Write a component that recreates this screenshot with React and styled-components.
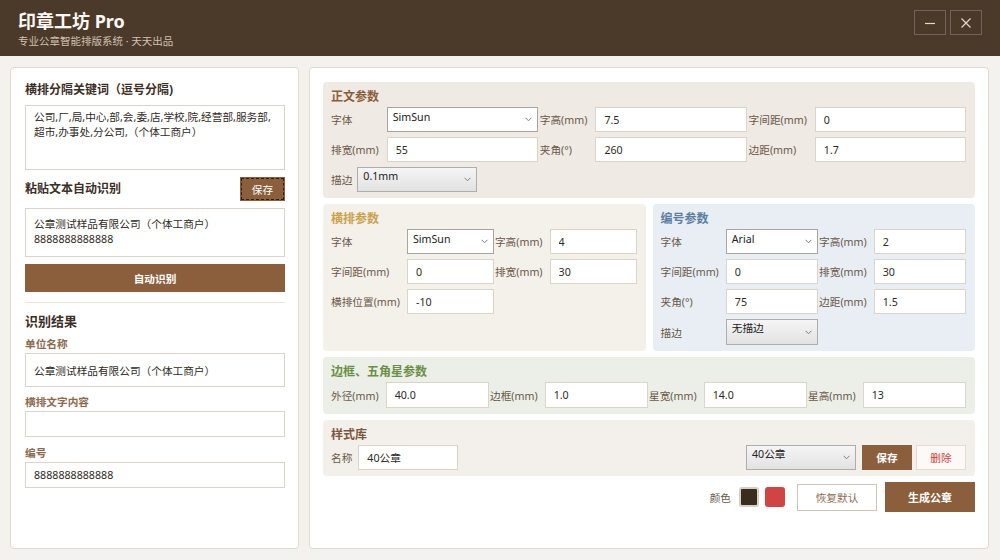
import React from "react";
import styled, { createGlobalStyle } from "styled-components";

const colors = {
  header: "#4b392a",
  page: "#f4f2ee",
  brown: "#8b5e3c",
  border: "#ddd4c9",
  label: "#6a5849",
  text: "#2f2a26",
};

const GlobalStyle = createGlobalStyle`
  html, body { margin: 0; padding: 0; background: ${colors.page}; }
  body {
    font-family: "Noto Sans", "Noto Sans CJK SC", sans-serif;
    font-size: 10.67px;
    color: ${colors.text};
  }
  * { box-sizing: border-box; }
`;

const Page = styled.div`
  width: 1000px;
  height: 560px;
  display: flex;
  flex-direction: column;
  background: ${colors.page};
  overflow: hidden;
`;

const Header = styled.header`
  height: 56px;
  flex: none;
  background: ${colors.header};
  display: flex;
  justify-content: space-between;
  align-items: flex-start;
  padding: 10px 18px 0 18px;
`;

const Brand = styled.div`
  display: flex;
  flex-direction: column;
`;

const AppTitle = styled.h1`
  margin: 0;
  font-size: 18px;
  line-height: 22px;
  font-weight: 700;
  color: #fbf7f2;
`;

const AppSubtitle = styled.div`
  margin-top: 2px;
  font-size: 10.5px;
  line-height: 14px;
  color: #cfc1b1;
`;

const WinButtons = styled.div`
  display: flex;
  gap: 4px;
`;

const WinButton = styled.button`
  width: 32px;
  height: 25px;
  padding: 0;
  display: flex;
  align-items: center;
  justify-content: center;
  background: transparent;
  border: 1px solid rgba(255, 255, 255, 0.22);
  cursor: pointer;
`;

const Main = styled.main`
  flex: 1;
  display: flex;
  gap: 10px;
  padding: 11px 11px 11px 10px;
  min-height: 0;
`;

const LeftPanel = styled.aside`
  width: 289px;
  flex: none;
  background: #fff;
  border: 1px solid #e0d9cf;
  border-radius: 4px;
  padding: 14px 13px 14px 14px;
  display: flex;
  flex-direction: column;
`;

const LeftTitle = styled.div`
  font-size: 12px;
  line-height: 16px;
  font-weight: 700;
  color: #3b2f26;
`;

const KeywordArea = styled.textarea`
  margin-top: 7px;
  width: 100%;
  height: 65px;
  border: 1px solid ${colors.border};
  padding: 4px 4px 4px 8px;
  font-family: inherit;
  font-size: 10.67px;
  line-height: 15px;
  color: ${colors.text};
  resize: none;
  outline: none;
`;

const PasteRow = styled.div`
  margin-top: 7px;
  height: 24px;
  display: flex;
  align-items: center;
  justify-content: space-between;
`;

const SmallSave = styled.button`
  width: 45px;
  height: 24px;
  border: none;
  background: ${colors.brown};
  color: #fff;
  font-family: inherit;
  font-size: 10.67px;
  outline: 1px dashed #2a1d14;
  outline-offset: -2px;
`;

const PasteBox = styled.div`
  margin-top: 7px;
  height: 49px;
  border: 1px solid ${colors.border};
  padding: 8px;
  line-height: 15px;
  color: ${colors.text};
`;

const WideButton = styled.button`
  margin-top: 7px;
  height: 28px;
  width: 100%;
  border: none;
  background: ${colors.brown};
  color: #fff;
  font-family: inherit;
  font-size: 10.67px;
  font-weight: 700;
`;

const Divider = styled.hr`
  margin: 10px 0 0;
  border: none;
  height: 1px;
  background: #ebe5dd;
`;

const ResultTitle = styled.div`
  margin-top: 9px;
  font-size: 13px;
  line-height: 18px;
  font-weight: 700;
  color: #3b2f26;
`;

const Field = styled.div`
  margin-top: ${(p) => p.$top || 7}px;
  display: flex;
  flex-direction: column;
`;

const FieldLabel = styled.label`
  line-height: 16px;
  font-weight: 700;
  color: #8b6a4f;
  margin-bottom: 1px;
`;

const TextInput = styled.input`
  width: 100%;
  min-width: 0;
  height: ${(p) => p.$h || 25}px;
  border: 1px solid ${colors.border};
  padding: 0 8px;
  font-family: inherit;
  font-size: 10.67px;
  color: ${colors.text};
  background: #fff;
  outline: none;
`;

const RightPanel = styled.section`
  flex: 1;
  background: #fff;
  border: 1px solid #e0d9cf;
  border-radius: 4px;
  padding: 14px 13px;
  display: flex;
  flex-direction: column;
  gap: 6px;
`;

const Section = styled.div`
  background: ${(p) => p.$bg};
  border-radius: 4px;
  padding: 7px 9px 6px 8px;
`;

const SectionTitle = styled.div`
  font-size: 12px;
  line-height: 16px;
  font-weight: 700;
  color: ${(p) => p.$color};
  margin-bottom: 2px;
`;

const ParamGrid = styled.div`
  display: grid;
  grid-template-columns: ${(p) => p.$cols};
  column-gap: ${(p) => p.$gap || 1}px;
  row-gap: 5px;
  align-items: center;
`;

const Label = styled.span`
  color: ${colors.label};
  padding-right: 6px;
  white-space: nowrap;
`;

const SplitRow = styled.div`
  display: grid;
  grid-template-columns: 1fr 1fr;
  gap: 7px;
`;

const InlineRow = styled.div`
  margin-top: 5px;
  display: flex;
  align-items: center;
  gap: 5px;
`;

const SelectBox = styled.div`
  height: ${(p) => p.$h || 25}px;
  width: ${(p) => (p.$width ? `${p.$width}px` : "100%")};
  min-width: 0;
  display: flex;
  align-items: center;
  justify-content: space-between;
  padding: 0 5px;
  border: 1px solid ${(p) => (p.$gray ? "#adadad" : "#a9a49e")};
  background: ${(p) => (p.$gray ? "linear-gradient(#f5f5f5, #e2e2e2)" : "#fff")};
  color: #222;
`;

const SelectText = styled.span`
  line-height: 14px;
  padding-bottom: ${(p) => (p.$gray ? 8 : 5)}px;
  white-space: nowrap;
`;

const Chevron = () => (
  <svg width="7" height="5" viewBox="0 0 7 5">
    <path d="M0.6 0.8 L3.5 3.8 L6.4 0.8" fill="none" stroke="#808080" strokeWidth="1" />
  </svg>
);

const Select = ({ value, gray, width, h }) => (
  <SelectBox $gray={gray} $width={width} $h={h}>
    <SelectText $gray={gray}>{value}</SelectText>
    <Chevron />
  </SelectBox>
);

const LibraryRow = styled.div`
  display: flex;
  align-items: center;
`;

const LibraryRight = styled.div`
  margin-left: auto;
  display: flex;
  align-items: center;
`;

const BrownButton = styled.button`
  width: ${(p) => p.$w}px;
  height: ${(p) => p.$h}px;
  margin-left: ${(p) => p.$ml || 0}px;
  border: none;
  background: ${colors.brown};
  color: #fff;
  font-family: inherit;
  font-size: ${(p) => p.$fs || 10.67}px;
  font-weight: 700;
`;

const DeleteButton = styled.button`
  width: 50px;
  height: 25px;
  margin-left: 4px;
  background: #fdf9f6;
  border: 1px solid #ecd8cf;
  color: #c9443d;
  font-family: inherit;
  font-size: 10.67px;
`;

const Footer = styled.div`
  display: flex;
  justify-content: flex-end;
  align-items: center;
  height: 30px;
`;

const FooterLabel = styled.span`
  color: ${colors.label};
  margin-right: 8px;
`;

const Swatch = styled.span`
  width: 20px;
  height: 20px;
  border-radius: 3px;
  background: ${(p) => p.$color};
  border: ${(p) => (p.$active ? "2px solid #d9cebf" : "none")};
  margin-right: ${(p) => p.$mr || 0}px;
`;

const GhostButton = styled.button`
  width: 80px;
  height: 27px;
  margin-right: 8px;
  background: #fff;
  border: 1px solid #cfc4b6;
  color: #8b6a4f;
  font-family: inherit;
  font-size: 10.67px;
`;

const App = () => (
  <Page>
    <GlobalStyle />
    <Header>
      <Brand>
        <AppTitle>印章工坊 Pro</AppTitle>
        <AppSubtitle>专业公章智能排版系统 · 天天出品</AppSubtitle>
      </Brand>
      <WinButtons>
        <WinButton aria-label="最小化">
          <svg width="12" height="12" viewBox="0 0 12 12">
            <path d="M1 6.5 H11" stroke="#e4d8c8" strokeWidth="1.2" />
          </svg>
        </WinButton>
        <WinButton aria-label="关闭">
          <svg width="12" height="12" viewBox="0 0 12 12">
            <path d="M1.5 1.5 L10.5 10.5 M10.5 1.5 L1.5 10.5" stroke="#e4d8c8" strokeWidth="1.2" />
          </svg>
        </WinButton>
      </WinButtons>
    </Header>

    <Main>
      <LeftPanel>
        <LeftTitle>横排分隔关键词（逗号分隔)</LeftTitle>
        <KeywordArea defaultValue="公司,厂,局,中心,部,会,委,店,学校,院,经营部,服务部,超市,办事处,分公司,（个体工商户）" />
        <PasteRow>
          <LeftTitle>粘贴文本自动识别</LeftTitle>
          <SmallSave>保存</SmallSave>
        </PasteRow>
        <PasteBox>
          公章测试样品有限公司（个体工商户）
          <br />
          8888888888888
        </PasteBox>
        <WideButton>自动识别</WideButton>
        <Divider />
        <ResultTitle>识别结果</ResultTitle>
        <Field $top={6}>
          <FieldLabel>单位名称</FieldLabel>
          <TextInput $h={34} defaultValue="公章测试样品有限公司（个体工商户）" />
        </Field>
        <Field>
          <FieldLabel>横排文字内容</FieldLabel>
          <TextInput $h={26} defaultValue="" />
        </Field>
        <Field $top={8}>
          <FieldLabel>编号</FieldLabel>
          <TextInput $h={26} defaultValue="8888888888888" />
        </Field>
      </LeftPanel>

      <RightPanel>
        <Section $bg="#efeae3">
          <SectionTitle $color="#8b5e3c">正文参数</SectionTitle>
          <ParamGrid $cols="auto 1fr auto 1fr auto 1fr" $gap={2}>
            <Label>字体</Label>
            <Select value="SimSun" />
            <Label>字高(mm)</Label>
            <TextInput defaultValue="7.5" />
            <Label>字间距(mm)</Label>
            <TextInput defaultValue="0" />
            <Label>排宽(mm)</Label>
            <TextInput defaultValue="55" />
            <Label>夹角(°)</Label>
            <TextInput defaultValue="260" />
            <Label>边距(mm)</Label>
            <TextInput defaultValue="1.7" />
          </ParamGrid>
          <InlineRow>
            <Label as="span" style={{ paddingRight: 0 }}>描边</Label>
            <Select value="0.1mm" gray width={120} />
          </InlineRow>
        </Section>

        <SplitRow>
          <Section $bg="#f4f0ea">
            <SectionTitle $color="#c9a24a">横排参数</SectionTitle>
            <ParamGrid $cols="auto 1fr auto 1fr">
              <Label>字体</Label>
              <Select value="SimSun" />
              <Label>字高(mm)</Label>
              <TextInput defaultValue="4" />
              <Label>字间距(mm)</Label>
              <TextInput defaultValue="0" />
              <Label>排宽(mm)</Label>
              <TextInput defaultValue="30" />
              <Label>横排位置(mm)</Label>
              <TextInput defaultValue="-10" />
            </ParamGrid>
          </Section>
          <Section $bg="#e8eef4">
            <SectionTitle $color="#5b7fa3">编号参数</SectionTitle>
            <ParamGrid $cols="auto 1fr auto 1fr">
              <Label>字体</Label>
              <Select value="Arial" />
              <Label>字高(mm)</Label>
              <TextInput defaultValue="2" />
              <Label>字间距(mm)</Label>
              <TextInput defaultValue="0" />
              <Label>排宽(mm)</Label>
              <TextInput defaultValue="30" />
              <Label>夹角(°)</Label>
              <TextInput defaultValue="75" />
              <Label>边距(mm)</Label>
              <TextInput defaultValue="1.5" />
              <Label>描边</Label>
              <Select value="无描边" gray h={26} />
            </ParamGrid>
          </Section>
        </SplitRow>

        <Section $bg="#ecefe8">
          <SectionTitle $color="#6b8f47">边框、五角星参数</SectionTitle>
          <ParamGrid $cols="auto 1fr auto 1fr auto 1fr auto 1fr">
            <Label>外径(mm)</Label>
            <TextInput $h={26} defaultValue="40.0" />
            <Label>边框(mm)</Label>
            <TextInput $h={26} defaultValue="1.0" />
            <Label>星宽(mm)</Label>
            <TextInput $h={26} defaultValue="14.0" />
            <Label>星高(mm)</Label>
            <TextInput $h={26} defaultValue="13" />
          </ParamGrid>
        </Section>

        <Section $bg="#f3efea">
          <SectionTitle $color="#7a5840">样式库</SectionTitle>
          <LibraryRow>
            <Label>名称</Label>
            <TextInput style={{ width: 100 }} defaultValue="40公章" />
            <LibraryRight>
              <Select value="40公章" gray width={110} />
              <BrownButton $w={50} $h={25} $ml={6}>保存</BrownButton>
              <DeleteButton>删除</DeleteButton>
            </LibraryRight>
          </LibraryRow>
        </Section>

        <Footer>
          <FooterLabel>颜色</FooterLabel>
          <Swatch $color="#3b2c20" $active $mr={6} />
          <Swatch $color="#d04444" $mr={12} />
          <GhostButton>恢复默认</GhostButton>
          <BrownButton $w={90} $h={30} $fs={11}>生成公章</BrownButton>
        </Footer>
      </RightPanel>
    </Main>
  </Page>
);

export default App;
